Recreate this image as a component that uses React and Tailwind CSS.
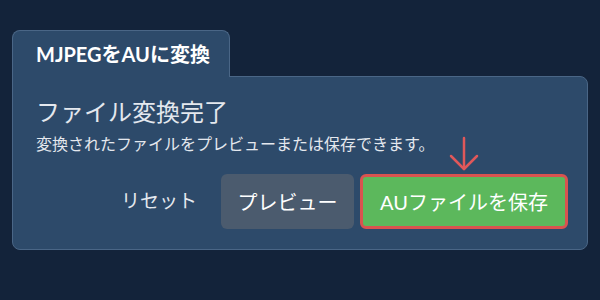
export default function App() {
  const font = { fontFamily: 'Lato, "Noto Sans CJK JP", sans-serif' };
  return (
    <div className="w-[600px] h-[300px] bg-[#13233a] overflow-hidden" style={font}>
      <div className="pt-[30px] pl-[12px] w-[588px]">
        <div className="relative z-10 -mb-px inline-flex h-[47px] w-[218px] items-center rounded-t-lg border border-b-0 border-[#4a6686] bg-[#2d4a6a] pl-[23px]">
          <span className="text-[20px] font-bold text-white">MJPEGをAUに変換</span>
        </div>
        <div className="rounded-lg rounded-tl-none border border-[#4a6686] bg-[#2d4a6a] pl-[23px] pr-[19px] pt-[20px] pb-[20px]">
          <h2 className="text-[24px] leading-[29px] text-[#e4e8ee]">ファイル変換完了</h2>
          <p className="mt-[8px] text-[16px] leading-[20px] text-[#e4e8ee]">
            変換されたファイルをプレビューまたは保存できます。
          </p>
          <div className="mt-[20px] flex items-center justify-end">
            <button className="h-[55px] px-[24px] text-[19px] text-[#e4e8ee]">リセット</button>
            <button className="h-[55px] w-[133px] rounded-md bg-[#4b5b6e] text-[20px] text-white">プレビュー</button>
            <div className="relative ml-[6px]">
              <svg
                className="absolute left-1/2 top-[-38px] -translate-x-1/2"
                width="32"
                height="36"
                viewBox="0 0 32 36"
                fill="none"
                stroke="#e0585a"
                strokeWidth="2.5"
                strokeLinecap="round"
                strokeLinejoin="round"
              >
                <path d="M16 2 V33" />
                <path d="M3 20 L16 33 L29 20" />
              </svg>
              <button className="h-[55px] w-[208px] rounded-md border-[3px] border-[#d9534f] bg-[#5cb85c] text-[20px] text-white">
                AUファイルを保存
              </button>
            </div>
          </div>
        </div>
      </div>
    </div>
  );
}
